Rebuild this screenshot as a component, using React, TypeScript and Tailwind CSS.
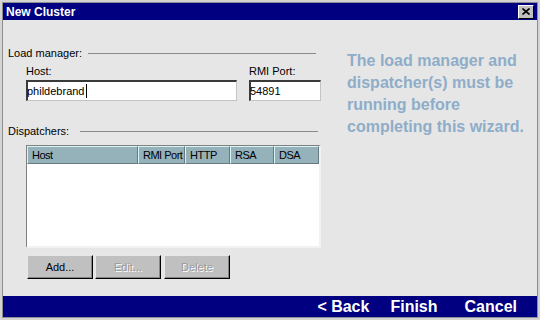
import React from 'react';

const FONT = { fontFamily: '"Liberation Sans", Arial, sans-serif' };

const COLUMNS = [
  { label: 'Host', width: 'w-[111px]' },
  { label: 'RMI Port', width: 'w-[47px]' },
  { label: 'HTTP', width: 'w-[45px]' },
  { label: 'RSA', width: 'w-[44px]' },
  { label: 'DSA', width: 'w-[45px]' },
];

function SectionLabel({ text, lineClass }: { text: string; lineClass: string }) {
  return (
    <div className="flex items-center h-[14px]">
      <span className="text-[11px] leading-[14px] text-black whitespace-nowrap">{text}</span>
      <div className={`flex-1 border-t border-[#8a8a8a] ${lineClass}`} />
    </div>
  );
}

function TextInput({ value, width, caret }: { value: string; width: string; caret?: boolean }) {
  return (
    <div
      className={`${width} h-[21px] bg-white border-t-2 border-l-2 border-t-[#3a3a3a] border-l-[#3a3a3a] border-b border-r border-b-[#c4c4c4] border-r-[#c4c4c4] flex items-center`}
    >
      <span className="text-[11px] leading-[14px] text-black -ml-[1px]">{value}</span>
      {caret && <span className="w-[1px] h-[14px] bg-black ml-[1px]" />}
    </div>
  );
}

function Button({ label, disabled }: { label: string; disabled?: boolean }) {
  return (
    <div className="w-[66px] h-[24px] bg-[#c0c0c0] border-t border-l border-t-[#e8e8e8] border-l-[#e8e8e8] border-b border-r border-b-black border-r-black shadow-[inset_-1px_-1px_0_#858585] flex items-center justify-center">
      {disabled ? (
        <span className="text-[11px] text-[#9a9a9a] [text-shadow:1px_1px_0_#ffffff]">{label}</span>
      ) : (
        <span className="text-[11px] text-black">{label}</span>
      )}
    </div>
  );
}

export default function App() {
  return (
    <div className="w-[540px] h-[320px] bg-[#d4d4d4] p-[2px]" style={FONT}>
      <div className="w-full h-full border border-[#8e8e8e] flex flex-col">
        {/* Title bar */}
        <div className="h-[17px] bg-[#000080] flex items-center justify-between pl-[3px] pr-[3px]">
          <span className="text-white font-bold text-[12px] leading-[14px]">New Cluster</span>
          <div className="w-[16px] h-[14px] bg-[#c0c0c0] border-t border-l border-t-white border-l-white border-b border-r border-b-black border-r-black flex items-center justify-center">
            <svg width="8" height="7" viewBox="0 0 8 7">
              <path d="M0.5 0.5 L7.5 6.5 M7.5 0.5 L0.5 6.5" stroke="black" strokeWidth="1.6" />
            </svg>
          </div>
        </div>

        {/* Body */}
        <div className="flex-1 flex bg-[#e6e6e6]">
          <div className="w-[327px] pl-[5px] pt-[26px] flex flex-col">
            <SectionLabel text="Load manager:" lineClass="ml-[6px] mr-[14px]" />

            <div className="flex mt-[4px] pl-[18px]">
              <div className="flex flex-col">
                <span className="text-[11px] leading-[14px] text-black">Host:</span>
                <div className="mt-[2px]">
                  <TextInput value="phildebrand" width="w-[211px]" caret />
                </div>
              </div>
              <div className="flex flex-col ml-[12px]">
                <span className="text-[11px] leading-[14px] text-black">RMI Port:</span>
                <div className="mt-[2px]">
                  <TextInput value="54891" width="w-[72px]" />
                </div>
              </div>
            </div>

            <div className="mt-[23px]">
              <SectionLabel text="Dispatchers:" lineClass="ml-[11px] mr-[12px]" />
            </div>

            {/* Table */}
            <div className="ml-[18px] mt-[7px] w-[295px] h-[103px] bg-white border-t border-l border-t-[#808080] border-l-[#808080] border-b-2 border-r-2 border-b-[#f2f2f2] border-r-[#f2f2f2]">
              <div className="flex h-[18px]">
                {COLUMNS.map((c) => (
                  <div
                    key={c.label}
                    className={`${c.width} h-full bg-[#95b2bb] border-t border-l border-t-[#d8f4f4] border-l-[#d8f4f4] border-b border-r border-b-[#687a80] border-r-[#687a80] flex items-center pl-[4px] overflow-hidden`}
                  >
                    <span className="text-[11px] leading-[14px] tracking-[-0.5px] text-black whitespace-nowrap">{c.label}</span>
                  </div>
                ))}
              </div>
            </div>

            <div className="flex ml-[19px] mt-[7px]">
              <Button label="Add..." />
              <div className="ml-[2px]">
                <Button label="Edit..." disabled />
              </div>
              <div className="ml-[3px]">
                <Button label="Delete" disabled />
              </div>
            </div>
          </div>

          <div className="pl-[17px] pt-[30px]">
            <p className="text-[#8eadc9] font-bold text-[16px] leading-[22px] whitespace-nowrap">
              The load manager and
              <br />
              dispatcher(s) must be
              <br />
              running before
              <br />
              completing this wizard.
            </p>
          </div>
        </div>

        {/* Bottom bar */}
        <div className="h-[21px] bg-[#000080] flex items-center justify-end pr-[20px]">
          <span className="text-white font-bold text-[16px] leading-[18px]">&lt; Back</span>
          <span className="text-white font-bold text-[16px] leading-[18px] ml-[21px]">Finish</span>
          <span className="text-white font-bold text-[16px] leading-[18px] ml-[27px]">Cancel</span>
        </div>
      </div>
    </div>
  );
}
